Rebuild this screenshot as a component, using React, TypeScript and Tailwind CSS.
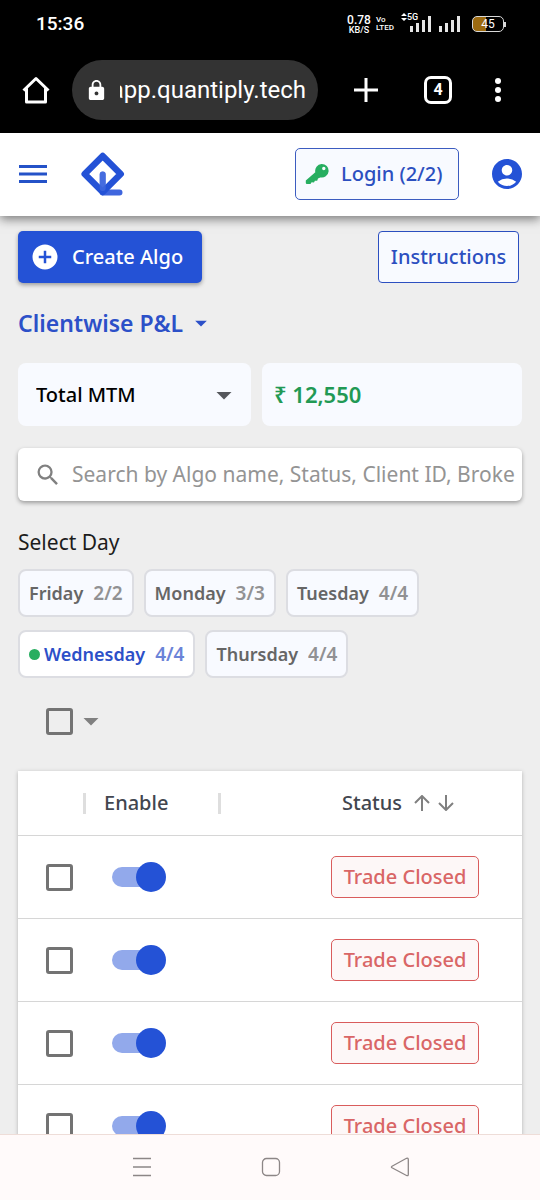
import React from "react";
import {
  MdAccountCircle,
  MdAddCircle,
  MdArrowDropDown,
  MdLock,
  MdSearch,
} from "react-icons/md";

const days = [
  { name: "Friday", count: "2/2", active: false },
  { name: "Monday", count: "3/3", active: false },
  { name: "Tuesday", count: "4/4", active: false },
  { name: "Wednesday", count: "4/4", active: true },
  { name: "Thursday", count: "4/4", active: false },
];

const algos = [
  { id: 1, status: "Trade Closed" },
  { id: 2, status: "Trade Closed" },
  { id: 3, status: "Trade Closed" },
  { id: 4, status: "Trade Closed" },
];

function Signal() {
  return (
    <svg viewBox="0 0 22 16" className="w-[22px] h-4" fill="#e6e6e6" aria-hidden="true">
      <rect x="0" y="10" width="3" height="6" />
      <rect x="6" y="7" width="3" height="9" />
      <rect x="12" y="4" width="3" height="12" />
      <rect x="18" y="0" width="3" height="16" />
    </svg>
  );
}

function StatusBar() {
  return (
    <div className="flex items-center justify-between h-12 pl-9 pr-[34px] text-white font-['Roboto',sans-serif]">
      <span className="text-[19px] leading-6 font-medium">15:36</span>
      <div className="flex items-center">
        <div className="w-6 mr-[5px] flex flex-col items-center font-medium">
          <span className="text-[12px] leading-[12px]">0.78</span>
          <span className="text-[9px] leading-[9px]">KB/S</span>
        </div>
        <div className="w-[18px] mr-[7px] flex flex-col font-medium text-[8px] leading-2">
          <span>Vo</span>
          <span>LTED</span>
        </div>
        <div className="relative w-[31px] h-4 flex justify-end">
          <Signal />
          <span className="absolute -top-1 left-0 flex items-center bg-black text-[9px] leading-[10px] font-medium">
            <svg viewBox="0 0 6 8" className="w-[6px] h-2" fill="white" aria-hidden="true">
              <path d="M3 0l3 3H0zM3 8l3-3H0z" />
            </svg>
            5G
          </span>
        </div>
        <div className="ml-[7px] mr-[11px]">
          <Signal />
        </div>
        <div className="flex items-center">
          <span className="w-8 h-4 rounded-[5px] border border-[#d8d8d8] bg-linear-to-r from-[#9c6a10] from-45% to-black to-45% flex items-center justify-center text-[12px] leading-3">
            45
          </span>
          <span className="w-[2px] h-[5px] bg-[#d8d8d8]" />
        </div>
      </div>
    </div>
  );
}

function BrowserBar() {
  return (
    <div className="flex items-center h-[85px] pb-px pl-[22px] pr-[38px] text-white font-['Roboto',sans-serif]">
      <button aria-label="Home" className="shrink-0">
        <svg viewBox="0 0 28 28" className="size-7" fill="none" stroke="currentColor" strokeWidth="3" strokeLinejoin="round" aria-hidden="true">
          <path d="M1.5 14.5L14 2.5l12.500 12M4.500 12.500V26h19V12.500" />
        </svg>
      </button>
      <div className="flex items-center flex-1 min-w-0 ml-[22px] h-[60px] rounded-full bg-[#333333] pl-[13px] pr-3">
        <MdLock className="size-[23px] shrink-0" />
        <div className="ml-3 flex-1 min-w-0 flex justify-end overflow-hidden">
          <span className="text-[24px] leading-8 whitespace-nowrap">app.quantiply.tech</span>
        </div>
      </div>
      <button aria-label="New tab" className="ml-9 shrink-0">
        <svg viewBox="0 0 24 24" className="size-6" stroke="currentColor" strokeWidth="3" aria-hidden="true">
          <path d="M12 0v24M0 12h24" />
        </svg>
      </button>
      <button className="ml-[46px] shrink-0 size-7 rounded-[7px] border-[3px] border-white flex items-center justify-center text-[16px] leading-4 font-bold">
        4
      </button>
      <button aria-label="More" className="ml-[42px] shrink-0">
        <svg viewBox="0 0 8 24" className="w-2 h-6" fill="currentColor" aria-hidden="true">
          <circle cx="4" cy="3" r="3" />
          <circle cx="4" cy="12" r="3" />
          <circle cx="4" cy="21" r="3" />
        </svg>
      </button>
    </div>
  );
}

function Logo() {
  return (
    <svg viewBox="0 0 44 44" className="size-11" fill="none" strokeLinecap="round" strokeLinejoin="round" aria-hidden="true">
      <path d="M21.700 22.500V40.500H38.500" stroke="#3f66de" strokeWidth="6" />
      <path d="M21.700 4l18 18-18 18-18-18z" stroke="#2452d6" strokeWidth="6.500" />
      <path d="M21.700 22.500V36" stroke="#4a6fe0" strokeWidth="6" strokeOpacity="0.600" />
    </svg>
  );
}

function KeyIcon() {
  return (
    <svg viewBox="0 0 24 22" className="w-6 h-[22px]" fill="#27ae60" aria-hidden="true">
      <path
        fillRule="evenodd"
        d="M16.500 1a6.800 6.800 0 1 1-1.300 13.400l-2.200 1.100-.8 2.200-2.300.1-.9 1.600-2.400-.2-1.100 1.900H2Q.8 21.100.8 20v-2.600L10.300 9.200A6.800 6.800 0 0 1 16.500 1zM18.800 3.800a1.700 1.700 0 1 0 0 3.400 1.700 1.700 0 0 0 0-3.400z"
      />
    </svg>
  );
}

function AppHeader() {
  return (
    <header className="relative z-10 flex items-center shrink-0 h-[83px] pb-[2px] pl-[19px] pr-[15px] bg-white shadow-[0_3px_10px_rgba(0,0,0,0.5)]">
      <button aria-label="Menu">
        <svg viewBox="0 0 28 20" className="w-7 h-5" stroke="#2452c8" strokeWidth="3" aria-hidden="true">
          <path d="M0 2.500h28M0 10h28M0 17.500h28" />
        </svg>
      </button>
      <a href="#" aria-label="Home" className="ml-[34px]">
        <Logo />
      </a>
      <button className="ml-auto flex items-center gap-3 w-[164px] h-[52px] pl-[9px] rounded-[5px] border border-[#3c5cc0] bg-[#f8faff] text-[#2c4fc0] text-[20px] font-medium whitespace-nowrap">
        <KeyIcon />
        Login (2/2)
      </button>
      <button aria-label="Account" className="ml-[30px]">
        <MdAccountCircle className="size-9 text-[#2452d6]" />
      </button>
    </header>
  );
}

function DayFilter() {
  return (
    <div className="mt-3 flex flex-wrap gap-x-[10px] gap-y-[13px]">
      {days.map((day) => (
        <button
          key={day.name}
          aria-pressed={day.active}
          className={`flex items-center h-12 px-[9px] rounded-lg border-2 border-[#dcdde2] text-[18px] font-semibold ${
            day.active ? "bg-white text-[#2c50c8]" : "bg-[#f8faff] text-[#666666]"
          }`}
        >
          {day.active && <span className="size-[11px] mr-1 rounded-full bg-[#27ae60]" />}
          {day.name}
          <span className="ml-[10px] text-[19px] opacity-70">{day.count}</span>
        </button>
      ))}
    </div>
  );
}

function AlgoTable() {
  return (
    <table className="mt-8 w-full table-fixed border-separate border-spacing-0 bg-white shadow-[0_1px_4px_rgba(0,0,0,0.25)]">
      <colgroup>
        <col className="w-[68px]" />
        <col className="w-[135px]" />
        <col />
      </colgroup>
      <thead>
        <tr className="h-[65px] text-[20px] text-[#42464f]">
          <th aria-label="Select" className="p-0 border-b border-[#d6d6d6]">
            <span className="block ml-auto w-[3px] h-[21px] bg-[#dedede]" />
          </th>
          <th className="p-0 border-b border-[#d6d6d6] font-medium">
            <div className="flex items-center justify-between pl-[18px]">
              Enable
              <span className="w-[3px] h-[21px] bg-[#dedede]" />
            </div>
          </th>
          <th className="p-0 border-b border-[#d6d6d6] font-medium">
            <div className="flex items-center pl-[121px]">
              Status
              <button aria-label="Sort ascending" className="ml-3">
                <svg viewBox="0 0 16 16" className="size-4" fill="none" stroke="#808080" strokeWidth="2" aria-hidden="true">
                  <path d="M8 16V1M1 8l7-7 7 7" />
                </svg>
              </button>
              <button aria-label="Sort descending" className="ml-2">
                <svg viewBox="0 0 16 16" className="size-4" fill="none" stroke="#808080" strokeWidth="2" aria-hidden="true">
                  <path d="M8 0v15M1 8l7 7 7-7" />
                </svg>
              </button>
            </div>
          </th>
        </tr>
      </thead>
      <tbody>
        {algos.map((algo) => (
          <tr key={algo.id} className="h-[83px]">
            <td className="p-0 pl-7 border-b border-[#d6d6d6]">
              <input
                type="checkbox"
                aria-label={`Select algo ${algo.id}`}
                className="block appearance-none size-[27px] rounded-[3px] border-3 border-[#737373] checked:bg-[#2452d6]"
              />
            </td>
            <td className="p-0 pl-[26px] border-b border-[#d6d6d6]">
              <input
                type="checkbox"
                role="switch"
                defaultChecked
                aria-label={`Enable algo ${algo.id}`}
                className="block appearance-none relative w-[55px] h-[30px] before:absolute before:left-0 before:top-[5px] before:w-12 before:h-5 before:rounded-full before:bg-[#bdbdbd] checked:before:bg-[#92a9eb] after:absolute after:left-0 after:top-0 after:size-[30px] after:rounded-full after:bg-[#f5f5f5] checked:after:left-6 checked:after:bg-[#2452d6]"
              />
            </td>
            <td className="p-0 pl-[110px] border-b border-[#d6d6d6]">
              <span className="flex items-center justify-center w-[148px] h-[42px] rounded-[5px] border border-[#d95c5c] bg-[#fdf7f7] text-[#d96666] text-[20px] font-medium">
                {algo.status}
              </span>
            </td>
          </tr>
        ))}
      </tbody>
    </table>
  );
}

function SystemNav() {
  return (
    <nav className="flex items-center justify-center gap-[109px] shrink-0 h-[66px] pb-[2px] pl-px border-t border-[#eeddd8] bg-[#fffafa]">
      <button aria-label="Recent apps">
        <svg viewBox="0 0 20 20" className="size-5" stroke="#8c8686" strokeWidth="1.500" aria-hidden="true">
          <path d="M1 1.500h18M1 10h18M1 18.500h18" />
        </svg>
      </button>
      <button aria-label="Home screen">
        <svg viewBox="0 0 20 20" className="size-5" fill="none" stroke="#8c8686" strokeWidth="1.300" aria-hidden="true">
          <rect x="1.500" y="1.500" width="17" height="17" rx="4" />
        </svg>
      </button>
      <button aria-label="Back">
        <svg viewBox="0 0 20 20" className="size-5" fill="none" stroke="#8c8686" strokeWidth="1.300" aria-hidden="true">
          <path d="M2 9.200L16.500 1.300Q18.300 .8 18.300 2.500V17.500Q18.300 19.200 16.500 18.500L2 10.800Q.8 10 2 9.200z" />
        </svg>
      </button>
    </nav>
  );
}

export default function App() {
  return (
    <div className="flex flex-col h-dvh bg-[#eeeeee] font-['Noto_Sans',sans-serif]">
      <div className="shrink-0 bg-black">
        <StatusBar />
        <BrowserBar />
      </div>
      <AppHeader />

      <main className="flex-1 min-h-0 overflow-y-auto [scrollbar-width:none] px-[18px] pt-[15px]">
        <div className="flex items-center justify-between pr-[3px]">
          <button className="flex items-center w-[184px] h-[52px] pl-3 rounded-[5px] bg-[#2452d6] text-white text-[20px] font-medium whitespace-nowrap shadow-[0_2px_4px_rgba(0,0,0,0.35)]">
            <MdAddCircle className="size-[30px] mr-3" />
            Create Algo
          </button>
          <button className="w-[141px] h-[52px] rounded-[4px] border border-[#2c4fc0] bg-[#f8faff] text-[#2c4fc0] text-[20px] font-medium">
            Instructions
          </button>
        </div>

        <button className="mt-6 flex items-center text-[23px] leading-8 font-semibold text-[#2c50c8]">
          Clientwise P&amp;L
          <MdArrowDropDown className="ml-1 size-7" />
        </button>

        <div className="mt-6 flex gap-[11px]">
          <div className="relative w-[233px]">
            <select
              aria-label="P&L type"
              className="appearance-none w-full h-[63px] pl-[18px] rounded-lg bg-[#f8faff] text-black text-[20px] font-medium"
            >
              <option>Total MTM</option>
            </select>
            <MdArrowDropDown className="absolute right-[9px] top-[14px] size-9 text-[#55575c] pointer-events-none" />
          </div>
          <div className="flex-1 flex items-center h-[63px] pl-3 rounded-lg bg-[#f8faff] text-[#229954] text-[22px] font-semibold">
            ₹ 12,550
          </div>
        </div>

        <label className="mt-[22px] flex items-center h-[53px] pl-4 pr-1 rounded-md bg-white shadow-[0_2px_4px_rgba(0,0,0,0.35)]">
          <MdSearch className="size-7 shrink-0 text-[#808080]" />
          <input
            type="text"
            aria-label="Search algos"
            placeholder="Search by Algo name, Status, Client ID, Broke"
            className="ml-[10px] flex-1 min-w-0 outline-none text-[21px] placeholder:text-[#949494]"
          />
        </label>

        <h2 className="mt-[27px] text-[21px] leading-7 text-[#1c1c1c]">Select Day</h2>
        <div className="pt-px">
          <DayFilter />
        </div>

        <div className="mt-[25px] pl-7 flex items-center">
          <input
            type="checkbox"
            aria-label="Select all"
            className="appearance-none size-[27px] rounded-[3px] border-3 border-[#737373] checked:bg-[#2452d6]"
          />
          <button aria-label="Selection options">
            <MdArrowDropDown className="size-9 text-[#808080]" />
          </button>
        </div>

        <AlgoTable />
      </main>

      <SystemNav />
    </div>
  );
}
